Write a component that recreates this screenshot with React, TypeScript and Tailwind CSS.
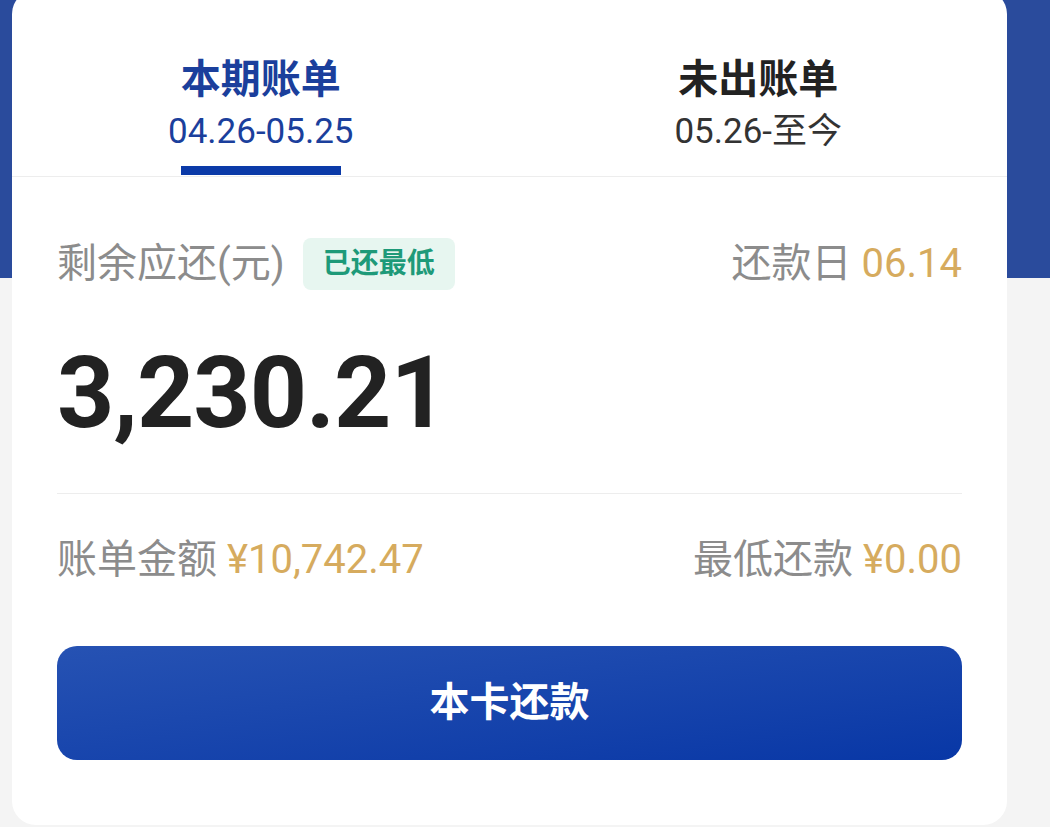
export default function App() {
  return (
    <div className="h-[827px] w-[1050px] overflow-hidden bg-[linear-gradient(to_bottom,#2a4b9c_278px,#f4f4f4_278px)] font-['Roboto','Noto_Sans_CJK_SC',sans-serif]">
      {/* bill card */}
      <div className="ml-[12px] mt-[-10px] w-[995px] rounded-[24px] bg-white">
        {/* tabs */}
        <div className="flex border-b border-[#ededed]">
          <div className="flex flex-1 flex-col items-center pt-[66px]">
            <div className="text-[40px] font-bold leading-[48px] text-[#1b3f9c]">本期账单</div>
            <div className="mt-[8px] text-[35px] leading-[40px] text-[#1b3f9c]">04.26-05.25</div>
            <div className="mb-[1px] mt-[14px] h-[9px] w-[160px] bg-[#0b3aa8]" />
          </div>
          <div className="flex flex-1 flex-col items-center pt-[66px]">
            <div className="text-[40px] font-bold leading-[48px] text-[#222]">未出账单</div>
            <div className="mt-[8px] text-[35px] leading-[40px] text-[#333]">05.26-至今</div>
          </div>
        </div>

        <div className="px-[45px] pb-[65px]">
          {/* remaining */}
          <div className="mt-[61px] flex items-center justify-between">
            <div className="flex items-center">
              <span className="text-[40px] leading-[48px] text-[#8c8c8c]">剩余应还(元)</span>
              <span className="ml-[18px] flex h-[52px] items-center rounded-[8px] bg-[#e7f6f0] px-[20px] text-[28px] font-bold text-[#1e9a79]">
                已还最低
              </span>
            </div>
            <div className="flex text-[40px] leading-[48px] text-[#8c8c8c]">
              还款日<span className="ml-[10px] text-[#d6ab5e]">06.14</span>
            </div>
          </div>

          <div className="mt-[53px] text-[100px] font-bold leading-[100px] tracking-[-1px] text-[#222]">3,230.21</div>

          <div className="mt-[50px] h-px bg-[#ededed]" />

          {/* amounts */}
          <div className="mt-[42px] flex items-center justify-between text-[40px] leading-[48px] text-[#8c8c8c]">
            <div className="flex">
              账单金额<span className="ml-[10px] text-[#d6ab5e]">¥10,742.47</span>
            </div>
            <div className="flex">
              最低还款<span className="ml-[10px] text-[#d6ab5e]">¥0.00</span>
            </div>
          </div>

          <button className="mt-[62px] flex h-[114px] w-full items-center justify-center rounded-[20px] bg-linear-to-br from-[#2652b3] to-[#0837a6] text-[40px] font-bold text-white">
            本卡还款
          </button>
        </div>
      </div>
    </div>
  );
}
